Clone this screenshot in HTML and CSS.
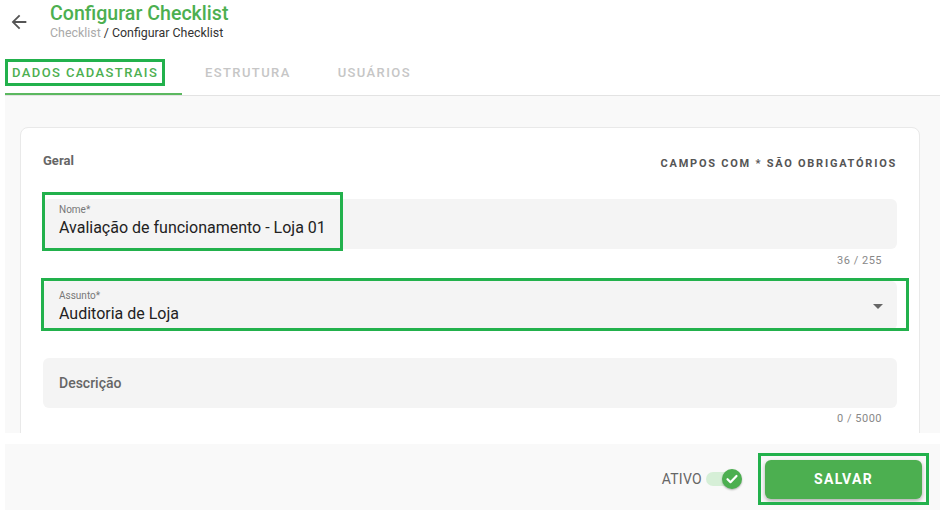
FILE: index.html
```html
<!DOCTYPE html>
<html lang="pt-BR">
<head>
<meta charset="utf-8">
<title>Configurar Checklist</title>
<link rel="stylesheet" href="styles.css">
</head>
<body>
<div class="page">
  <header class="header">
    <button class="back" aria-label="Voltar">
      <svg viewBox="0 0 24 24" width="22" height="22"><path d="M20 11H7.830l5.59-5.59L12 4l-8 8 8 8 1.41-1.41L7.83 13H20v-2z" fill="#555"/></svg>
    </button>
    <div class="titles">
      <h1 class="title">Configurar Checklist</h1>
      <div class="crumbs"><span class="crumb-muted">Checklist</span> / Configurar Checklist</div>
    </div>
  </header>

  <nav class="tabs">
    <div class="tab tab-first tab-active">DADOS CADASTRAIS</div>
    <div class="tab">ESTRUTURA</div>
    <div class="tab">USUÁRIOS</div>
  </nav>

  <main class="content">
    <section class="card">
      <div class="card-head">
        <div class="section-title">Geral</div>
        <div class="required-note">CAMPOS COM * SÃO OBRIGATÓRIOS</div>
      </div>

      <div class="field field-nome">
        <div class="field-label">Nome*</div>
        <div class="field-value">Avaliação de funcionamento - Loja 01</div>
      </div>
      <div class="counter">36 / 255</div>

      <div class="field field-select">
        <div class="field-body">
          <div class="field-label">Assunto*</div>
          <div class="field-value">Auditoria de Loja</div>
        </div>
        <span class="caret"></span>
      </div>

      <div class="field field-desc">
        <div class="placeholder">Descrição</div>
      </div>
      <div class="counter">0 / 5000</div>
    </section>
  </main>

  <footer class="footer">
    <div class="switch-wrap">
      <span class="switch-label">ATIVO</span>
      <span class="switch">
        <span class="switch-track"></span>
        <span class="switch-knob">
          <svg viewBox="0 0 20 20" width="20" height="20"><path d="M5.5 10.2l3 3 6-6.2" fill="none" stroke="#fff" stroke-width="2.2" stroke-linecap="round" stroke-linejoin="round"/></svg>
        </span>
      </span>
    </div>
    <button class="btn-save">SALVAR</button>
  </footer>

  <div class="mark mark-tab"></div>
  <div class="mark mark-nome"></div>
  <div class="mark mark-assunto"></div>
  <div class="mark mark-save"></div>
</div>
</body>
</html>
```

FILE: styles.css
```css
* { box-sizing: border-box; }

html, body {
  margin: 0;
  padding: 0;
  background: #fff;
}

body {
  font-family: Roboto, "Noto Sans", Arial, sans-serif;
  color: #222;
  width: 940px;
  height: 514px;
  overflow: hidden;
}

.page {
  position: relative;
  width: 940px;
  height: 514px;
}

/* Header */
.header {
  display: flex;
  align-items: flex-start;
  height: 49px;
  padding: 2px 0 0 8px;
}

.back {
  border: 0;
  background: none;
  padding: 0;
  margin: 9px 0 0 0;
  width: 22px;
  height: 22px;
  display: flex;
}

.titles {
  margin-left: 20px;
}

.title {
  margin: 0;
  font-size: 19.6px;
  line-height: 24px;
  font-weight: 500;
  color: #4caf50;
}

.crumbs {
  font-size: 12.4px;
  line-height: 14px;
  color: #333;
}

.crumb-muted { color: #aaa; }

/* Tabs */
.tabs {
  display: flex;
  margin-left: 5px;
  border-bottom: 1px solid #e3e3e3;
}

.tab {
  position: relative;
  height: 46px;
  display: flex;
  align-items: center;
  padding: 0 24px 0 23px;
  font-size: 13px;
  font-weight: 500;
  letter-spacing: 1.4px;
  color: #c6c6c6;
}

.tab-first {
  width: 177px;
  padding: 0 0 0 7px;
}

.tab-active { color: #4caf50; }

.tab-active::after {
  content: "";
  position: absolute;
  left: 0;
  right: 0;
  bottom: 0;
  height: 2px;
  background: #5cb860;
}

/* Content */
.content {
  margin-left: 5px;
  height: 337px;
  background: #f9f9f9;
  padding: 31px 0 0 15px;
  overflow: hidden;
}

.card {
  width: 900px;
  height: 340px;
  background: #fff;
  border: 1px solid #e9e9e9;
  border-radius: 8px;
  padding: 25px 22px 0 22px;
}

.card-head {
  display: flex;
  justify-content: space-between;
  align-items: flex-start;
  margin-bottom: 27px;
}

.section-title {
  font-size: 13px;
  line-height: 16px;
  font-weight: 700;
  color: #666;
}

.required-note {
  margin-top: 3px;
  font-size: 11px;
  line-height: 16px;
  font-weight: 700;
  letter-spacing: 1.75px;
  color: #555;
}

.field {
  background: #f4f4f4;
  border-radius: 6px;
  height: 50px;
  padding: 5px 16px 0 16px;
}

.field-label {
  font-size: 10px;
  line-height: 12px;
  color: #777;
}

.field-value {
  margin-top: 2px;
  font-size: 16px;
  line-height: 20px;
  color: #222;
}

.counter {
  margin-top: 5px;
  padding-right: 15px;
  text-align: right;
  font-size: 11px;
  line-height: 14px;
  letter-spacing: 0.5px;
  color: #888;
}

.field-select {
  margin-top: 13px;
  height: 49px;
  padding-top: 9px;
  padding-right: 14px;
  display: flex;
  justify-content: space-between;
  align-items: flex-start;
}

.caret {
  margin-top: 14px;
  width: 0;
  height: 0;
  border-left: 5px solid transparent;
  border-right: 5px solid transparent;
  border-top: 5px solid #666;
}

.field-desc {
  margin-top: 28px;
  padding-top: 0;
  display: flex;
  align-items: center;
}

.placeholder {
  font-size: 14px;
  font-weight: 500;
  color: #666;
}

.field-desc + .counter { margin-top: 4px; }

/* Footer */
.footer {
  margin: 11px 0 0 5px;
  height: 66px;
  background: #f9f9f9;
  display: flex;
  justify-content: flex-end;
  align-items: center;
  padding: 4px 18px 0 0;
}

.switch-wrap {
  display: flex;
  align-items: center;
  margin-right: 23px;
}

.switch-label {
  font-size: 14px;
  color: #666;
  letter-spacing: 0.3px;
  margin-right: 4px;
}

.switch {
  position: relative;
  width: 36px;
  height: 20px;
  display: flex;
  align-items: center;
}

.switch-track {
  width: 30px;
  height: 14px;
  border-radius: 7px;
  background: #d6efd7;
}

.switch-knob {
  position: absolute;
  right: 0;
  top: 0;
  width: 20px;
  height: 20px;
  border-radius: 50%;
  background: #4caf50;
  box-shadow: 0 1px 2px rgba(0,0,0,0.3);
  display: flex;
}

.btn-save {
  width: 157px;
  height: 39px;
  border: 0;
  border-radius: 6px;
  background: #4caf50;
  color: #fff;
  font-family: Roboto, Arial, sans-serif;
  font-size: 14px;
  font-weight: 700;
  letter-spacing: 1.25px;
  box-shadow: 0 2px 4px rgba(0,0,0,0.3);
}

/* Annotation overlays */
.mark {
  position: absolute;
  border: 3px solid #22b14c;
  pointer-events: none;
}

.mark-tab { left: 5px; top: 59px; width: 160px; height: 27px; }
.mark-nome { left: 42px; top: 192px; width: 301px; height: 59px; }
.mark-assunto { left: 41px; top: 278px; width: 868px; height: 53px; }
.mark-save { left: 758px; top: 453px; width: 171px; height: 52px; }
```
